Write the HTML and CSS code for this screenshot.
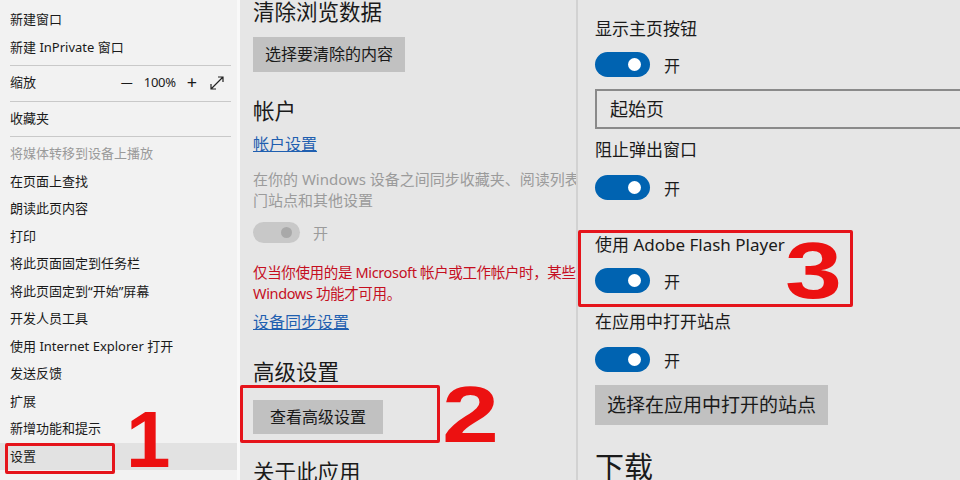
FILE: index.html
```html
<!DOCTYPE html>
<html lang="zh-CN">
<head>
    <meta charset="UTF-8">
    <title>Edge 设置</title>
    <link rel="stylesheet" href="styles.css">
</head>
<body>
    <div class="app">
        <div class="menu">
            <div class="item">新建窗口</div>
            <div class="item">新建 InPrivate 窗口</div>
            <div class="sep"></div>
            <div class="item zoom">
                <span class="zoom-label">缩放</span>
                <span class="zoom-ctrl">
                    <span class="minus">—</span>
                    <span class="pct">100%</span>
                    <span class="plus">+</span>
                    <svg class="expand" width="14" height="14" viewBox="0 0 14 14">
                        <path d="M1 13 L13 1 M8 1 H13 V6 M1 8 V13 H6" fill="none" stroke="#222" stroke-width="1.2"/>
                    </svg>
                </span>
            </div>
            <div class="sep"></div>
            <div class="item">收藏夹</div>
            <div class="sep"></div>
            <div class="item disabled">将媒体转移到设备上播放</div>
            <div class="item">在页面上查找</div>
            <div class="item">朗读此页内容</div>
            <div class="item">打印</div>
            <div class="item">将此页面固定到任务栏</div>
            <div class="item">将此页固定到“开始”屏幕</div>
            <div class="item">开发人员工具</div>
            <div class="item">使用 Internet Explorer 打开</div>
            <div class="item">发送反馈</div>
            <div class="item">扩展</div>
            <div class="item">新增功能和提示</div>
            <div class="item active">设置</div>
            <div class="mark box-1"></div>
            <div class="num num-1">1</div>
        </div>

        <div class="middle">
            <h2 class="heading first">清除浏览数据</h2>
            <div class="btn btn-clear">选择要清除的内容</div>
            <h2 class="heading account">帐户</h2>
            <a class="link account-link">帐户设置</a>
            <p class="muted">在你的 Windows 设备之间同步收藏夹、阅读列表、热<br>门站点和其他设置</p>
            <div class="toggle-row sync-row">
                <span class="toggle off"><span class="knob"></span></span>
                <span class="state muted-state">开</span>
            </div>
            <p class="warn">仅当你使用的是 Microsoft 帐户或工作帐户时，某些<br>Windows 功能才可用。</p>
            <a class="link sync-link">设备同步设置</a>
            <h2 class="heading advanced">高级设置</h2>
            <div class="btn btn-advanced">查看高级设置</div>
            <h2 class="heading about">关于此应用</h2>
            <div class="mark box-2"></div>
            <div class="num num-2">2</div>
        </div>

        <div class="right">
            <div class="label l-home">显示主页按钮</div>
            <div class="toggle-row t-home">
                <span class="toggle on"><span class="knob"></span></span>
                <span class="state">开</span>
            </div>
            <div class="select">起始页</div>
            <div class="label l-popup">阻止弹出窗口</div>
            <div class="toggle-row t-popup">
                <span class="toggle on"><span class="knob"></span></span>
                <span class="state">开</span>
            </div>
            <div class="label l-flash">使用 Adobe Flash Player</div>
            <div class="toggle-row t-flash">
                <span class="toggle on"><span class="knob"></span></span>
                <span class="state">开</span>
            </div>
            <div class="label l-apps">在应用中打开站点</div>
            <div class="toggle-row t-apps">
                <span class="toggle on"><span class="knob"></span></span>
                <span class="state">开</span>
            </div>
            <div class="btn btn-apps">选择在应用中打开的站点</div>
            <h2 class="heading download">下载</h2>
            <div class="mark box-3"></div>
            <div class="num num-3">3</div>
        </div>
    </div>
</body>
</html>
```

FILE: styles.css
```css
body {
    margin: 0;
    font-family: "Noto Sans", "Noto Sans CJK SC", sans-serif;
    color: #1a1a1a;
    overflow: hidden;
}
.app {
    display: flex;
    width: 960px;
    height: 480px;
    overflow: hidden;
}

/* left menu */
.menu {
    position: relative;
    width: 237px;
    flex: none;
    background: #f2f2f2;
    border-right: 3px solid #f9f9f9;
    padding-top: 6px;
    font-size: 13px;
}
.item {
    height: 27.5px;
    line-height: 27.5px;
    padding-left: 10px;
    white-space: nowrap;
}
.item.disabled {
    color: #9a9a9a;
}
.item.active {
    background: #e2e2e2;
}
.sep {
    height: 8px;
    position: relative;
}
.sep::after {
    content: "";
    position: absolute;
    left: 10px;
    right: 6px;
    top: 4px;
    border-top: 1px solid #c9c9c9;
}
.zoom {
    display: flex;
    justify-content: space-between;
    padding-right: 13px;
}
.zoom-ctrl {
    display: flex;
    align-items: center;
}
.minus {
    font-size: 12px;
    margin-right: 11px;
}
.pct {
    letter-spacing: -0.3px;
}
.plus {
    font-size: 18px;
    margin-left: 11px;
    margin-right: 13px;
}

/* middle settings column */
.middle {
    position: relative;
    width: 323px;
    flex: none;
    background: #e6e6e6;
    border-right: 2px solid #d2d2d2;
    padding-left: 13px;
    overflow: hidden;
    white-space: nowrap;
}
.heading {
    margin: 0;
    font-size: 21.5px;
    font-weight: normal;
    line-height: 28px;
}
.heading.first {
    margin-top: -2px;
}
.btn {
    display: inline-block;
    background: #c1c1c1;
    font-size: 16px;
    padding: 0 12px;
}
.btn-clear {
    margin-top: 11px;
    height: 35px;
    line-height: 35px;
}
.heading.account {
    margin-top: 25px;
}
.link {
    display: block;
    width: max-content;
    color: #1f5fb0;
    text-decoration: underline;
    font-size: 16px;
    line-height: 22px;
}
.account-link {
    margin-top: 8px;
}
.muted {
    margin: 14px 0 0;
    color: #9b9b9b;
    font-size: 15px;
    line-height: 21px;
}
.toggle-row {
    display: flex;
    align-items: center;
}
.sync-row {
    margin-top: 11px;
}
.toggle {
    position: relative;
    display: inline-block;
    width: 55px;
    height: 25px;
    border-radius: 13px;
    background: #0063b1;
}
.toggle .knob {
    position: absolute;
    right: 9px;
    top: 6px;
    width: 13px;
    height: 13px;
    border-radius: 50%;
    background: #fff;
}
.toggle.off {
    width: 47px;
    height: 21px;
    background: #c8c8c8;
}
.toggle.off .knob {
    right: 8px;
    top: 5px;
    width: 11px;
    height: 11px;
    background: #a9a9a9;
}
.state {
    margin-left: 14px;
    font-size: 16px;
}
.muted-state {
    margin-left: 13px;
    font-size: 15px;
    color: #9b9b9b;
}
.warn {
    margin: 19px 0 0;
    color: #c50f1f;
    font-size: 14.5px;
    letter-spacing: -0.35px;
    line-height: 21px;
}
.sync-link {
    margin-top: 7px;
}
.heading.advanced {
    margin-top: 25px;
}
.btn-advanced {
    margin-top: 14px;
    height: 34px;
    line-height: 34px;
    padding: 0 17px;
}
.heading.about {
    margin-top: 24px;
}

/* right settings column */
.right {
    position: relative;
    flex: 1;
    background: #e6e6e6;
    padding-left: 17px;
    white-space: nowrap;
}
.label {
    font-size: 17px;
    line-height: 20px;
}
.l-home {
    margin-top: 19px;
}
.t-home {
    margin-top: 13px;
}
.select {
    margin-top: 12px;
    height: 36px;
    line-height: 36px;
    border: 2px solid #8a8a8a;
    border-right: none;
    padding-left: 13px;
    font-size: 18px;
}
.l-popup {
    margin-top: 11px;
}
.t-popup {
    margin-top: 15px;
}
.l-flash {
    margin-top: 35px;
}
.t-flash {
    margin-top: 13px;
}
.l-apps {
    margin-top: 19px;
}
.t-apps {
    margin-top: 15px;
}
.btn-apps {
    margin-top: 13px;
    height: 40px;
    line-height: 40px;
    padding: 0 12px;
    font-size: 19px;
}
.heading.download {
    margin-top: 24px;
    font-size: 29px;
    line-height: 36px;
}

/* red annotations */
.mark {
    position: absolute;
    border: 3px solid #e5141b;
    border-radius: 2px;
}
.box-1 {
    left: 5px;
    top: 443px;
    width: 104px;
    height: 25px;
}
.box-2 {
    left: 0;
    top: 385px;
    width: 194px;
    height: 52px;
}
.box-3 {
    left: 0;
    top: 230px;
    width: 269px;
    height: 71px;
}
.num {
    position: absolute;
    font-family: "Liberation Sans", Arial, sans-serif;
    font-weight: bold;
    font-size: 80px;
    line-height: 1;
    color: #ec1111;
    transform-origin: left top;
    transform: scaleX(1.28);
}
.num-1 {
    left: 126px;
    top: 400px;
    transform: none;
}
.num-2 {
    left: 202px;
    top: 375px;
}
.num-3 {
    left: 207px;
    top: 231px;
}
```
